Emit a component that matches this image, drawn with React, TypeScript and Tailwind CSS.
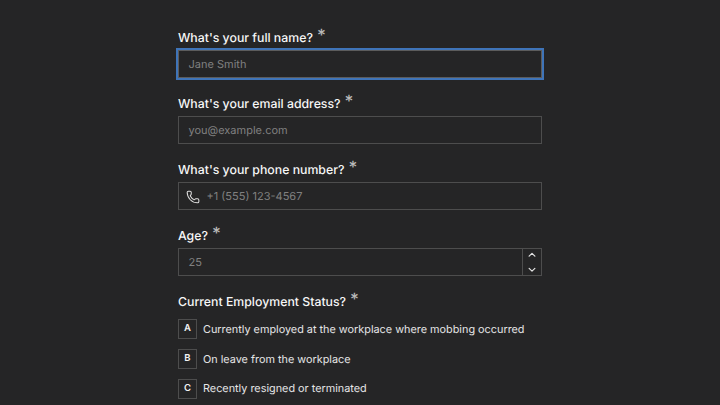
import { Phone, ChevronUp, ChevronDown } from "lucide-react";

const options = [
  { key: "A", label: "Currently employed at the workplace where mobbing occurred" },
  { key: "B", label: "On leave from the workplace" },
  { key: "C", label: "Recently resigned or terminated" },
];

function Label({ text }: { text: string }) {
  return (
    <label className="flex h-[20px] items-center pt-[2px] text-[12.3px] font-medium text-[#f7f7f7]">
      {text}
      <span className="ml-[4px] -mt-[4px] text-[17px] leading-none text-[#b8b8b8]">*</span>
    </label>
  );
}

export default function App() {
  return (
    <div className="h-[405px] w-[720px] overflow-hidden bg-[#252526] font-['Inter',sans-serif] [text-rendering:geometricPrecision]">
      <div className="mx-auto flex w-[364px] flex-col pt-[27px]">
        <Label text="What's your full name?" />
        <div className="mt-[3px] flex h-[28px] items-center border border-[#5c5c5c] px-[9.5px] pt-[1px] text-[11px] text-[#808080] outline outline-2 outline-offset-0 outline-[#3f74b8]">
          Jane Smith
        </div>

        <div className="mt-[15px]">
          <Label text="What's your email address?" />
        </div>
        <div className="mt-[3px] flex h-[28px] items-center border border-[#4d4d4d] px-[9.5px] pt-[1px] text-[11px] text-[#808080]">
          you@example.com
        </div>

        <div className="mt-[15px]">
          <Label text="What's your phone number?" />
        </div>
        <div className="mt-[3px] flex h-[28px] items-center gap-[6.5px] border border-[#4d4d4d] px-[7px] pt-[1px] text-[11px] text-[#808080]">
          <Phone size={14} strokeWidth={1.75} className="text-[#dedede]" />
          +1 (555) 123-4567
        </div>

        <div className="mt-[15px]">
          <Label text="Age?" />
        </div>
        <div className="mt-[3px] flex h-[28px] items-center justify-between border border-[#4d4d4d] pl-[9.5px] text-[11px] text-[#808080]">
          25
          <div className="flex h-full w-[19px] flex-col items-center justify-center gap-[3px] border-l border-[#4d4d4d] text-[#e4e4e4]">
            <ChevronUp size={12} strokeWidth={2.5} />
            <ChevronDown size={12} strokeWidth={2.5} />
          </div>
        </div>

        <div className="mt-[15px]">
          <Label text="Current Employment Status?" />
        </div>
        <div className="mt-[8px] flex flex-col gap-[9.75px]">
          {options.map((o) => (
            <div key={o.key} className="flex items-center gap-[6px] text-[10.85px] text-[#e6e6e6]">
              <span className="flex h-[20px] w-[19px] items-center justify-center border border-[#4d4d4d] pt-[1px] text-[9.5px] font-semibold text-[#f2f2f2]">
                {o.key}
              </span>
              {o.label}
            </div>
          ))}
        </div>
      </div>
    </div>
  );
}
